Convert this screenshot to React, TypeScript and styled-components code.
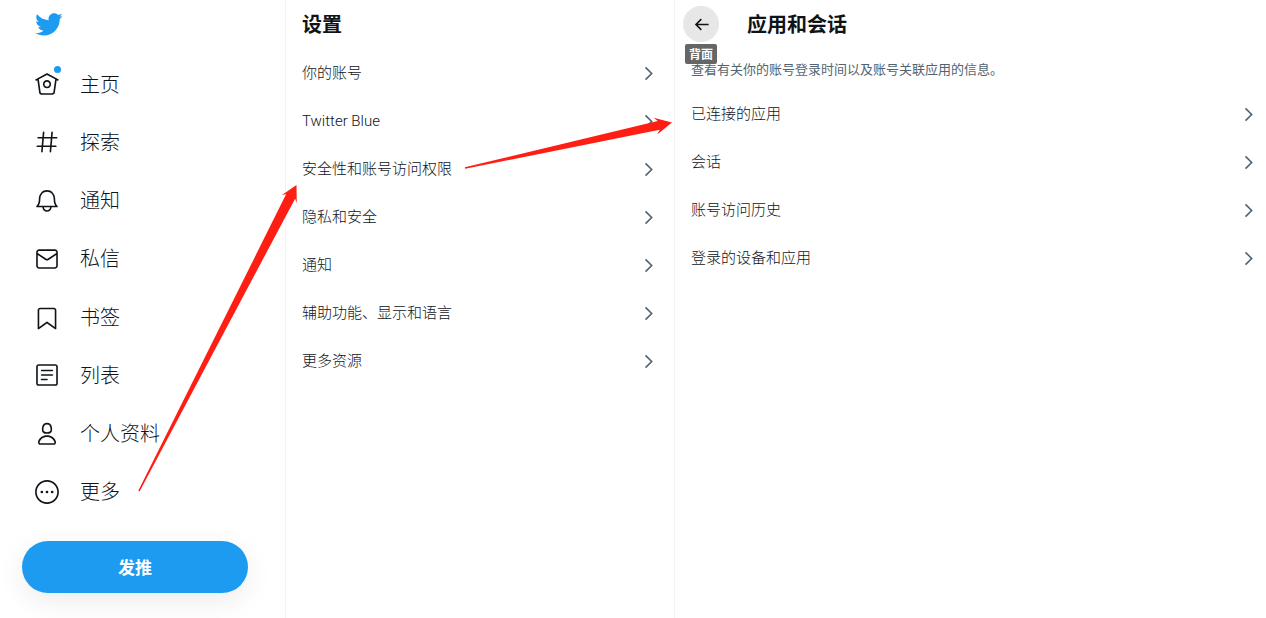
import styled, { createGlobalStyle } from 'styled-components';

const GlobalStyle = createGlobalStyle`
  html, body {
    margin: 0;
    height: 100%;
    overflow: hidden;
    background: #ffffff;
  }
`;

const Page = styled.div`
  position: relative;
  display: flex;
  width: 1266px;
  height: 618px;
  overflow: hidden;
  color: #0f1419;
  font-family: Roboto, 'Noto Sans CJK SC', sans-serif;
`;

const Sidebar = styled.aside`
  flex: 0 0 285px;
  display: flex;
  flex-direction: column;
  border-right: 1px solid #eff3f4;
`;

const Logo = styled.div`
  height: 55px;
  padding: 10px 0 0 34px;
  box-sizing: border-box;
  color: #1d9bf0;

  svg {
    display: block;
    width: 29px;
    height: 29px;
    fill: currentColor;
  }
`;

const NavItem = styled.div`
  height: 58.25px;
  display: flex;
  align-items: center;
  padding-left: 34px;
  gap: 20px;
  font-size: 20px;
  font-weight: 300;
`;

const NavLabel = styled.span`
  margin-top: -2px;
`;

const NavIcon = styled.span`
  position: relative;
  width: 26px;
  height: 26px;
  flex: none;

  svg {
    display: block;
    width: 26px;
    height: 26px;
    fill: #0f1419;
  }
`;

const Dot = styled.i`
  position: absolute;
  top: -5px;
  right: -1px;
  width: 7px;
  height: 7px;
  border-radius: 50%;
  background: #1d9bf0;
`;

const TweetButton = styled.button`
  margin: 20px 0 0 22px;
  width: 226px;
  height: 52px;
  padding: 0 0 2px;
  border: 0;
  border-radius: 26px;
  background: #1d9bf0;
  color: #ffffff;
  font: 700 17px 'Noto Sans CJK SC', sans-serif;
  box-shadow: 0 8px 28px rgba(0, 0, 0, 0.08);
`;

const Column = styled.section<{ $width?: number }>`
  flex: ${(p) => (p.$width ? `0 0 ${p.$width}px` : '1')};
  min-width: 0;
  display: flex;
  flex-direction: column;
  ${(p) => p.$width && 'border-right: 1px solid #eff3f4;'}
`;

const Header = styled.header<{ $inset: number }>`
  position: relative;
  height: 49px;
  flex: none;
  display: flex;
  align-items: center;
  padding-left: ${(p) => p.$inset}px;
`;

const Title = styled.h2`
  margin: -2px 0 0;
  font: 700 20px 'Noto Sans CJK SC', sans-serif;
`;

const BackButton = styled.button`
  width: 36px;
  height: 36px;
  margin: -1px 28px 0 0;
  padding: 0;
  border: 0;
  border-radius: 50%;
  background: #e7e7e7;
  display: flex;
  align-items: center;
  justify-content: center;

  svg {
    width: 19px;
    height: 19px;
    fill: #0f1419;
  }
`;

const Tooltip = styled.span`
  position: absolute;
  left: 10px;
  top: 44px;
  z-index: 1;
  width: 32px;
  height: 20px;
  border-radius: 2px;
  background: #666666;
  color: #ffffff;
  font: 700 12px/20px 'Noto Sans CJK SC', sans-serif;
  text-align: center;
`;

const Description = styled.p`
  height: 41px;
  margin: 0;
  padding: 12px 16px 0;
  box-sizing: border-box;
  color: #536471;
  font-size: 13px;
  line-height: 18px;
`;

const Row = styled.div<{ $inset: number; $right: number }>`
  height: 48px;
  flex: none;
  display: flex;
  align-items: center;
  justify-content: space-between;
  padding: 0 ${(p) => p.$right}px 0 ${(p) => p.$inset}px;
  font-size: 15px;
  font-weight: 300;

  svg {
    width: 19px;
    height: 19px;
    fill: #536471;
  }
`;

const RowLabel = styled.span`
  line-height: 22px;
`;

const ArrowLayer = styled.svg`
  position: absolute;
  inset: 0;
  width: 1266px;
  height: 618px;
  pointer-events: none;
`;

const glyphs: Record<string, string> = {
  home: 'M22.46 7.57L12.357 2.115c-.223-.12-.49-.12-.713 0L1.543 7.57c-.364.197-.5.652-.303 1.017.135.25.394.393.66.393.12 0 .243-.03.356-.09l.815-.44L4.7 19.963c.214 1.215 1.308 2.062 2.658 2.062h9.282c1.352 0 2.445-.848 2.663-2.087l1.626-11.49.818.442c.364.193.82.06 1.017-.304.196-.363.06-.818-.304-1.016zm-4.638 12.133c-.107.606-.703.822-1.18.822H7.36c-.48 0-1.075-.216-1.178-.798L4.48 7.69 12 3.628l7.522 4.06-1.7 12.015z M8.22 12.184c0 2.084 1.695 3.78 3.78 3.78s3.78-1.696 3.78-3.78-1.695-3.78-3.78-3.78-3.78 1.696-3.78 3.78zm6.06 0c0 1.258-1.022 2.28-2.28 2.28s-2.28-1.022-2.28-2.28 1.022-2.28 2.28-2.28 2.28 1.022 2.28 2.28z',
  explore: 'M21 7.337h-3.93l.372-4.272c.036-.412-.27-.775-.682-.812-.417-.03-.776.27-.812.683l-.383 4.4h-6.32l.37-4.27c.037-.413-.27-.776-.68-.813-.42-.03-.777.27-.813.683l-.384 4.4H3.782c-.414 0-.75.337-.75.75s.336.75.75.75H7.61l-.55 6.327H3c-.414 0-.75.336-.75.75s.336.75.75.75h3.93l-.372 4.272c-.036.412.27.775.682.812l.066.003c.385 0 .712-.295.746-.686l.383-4.4h6.32l-.37 4.27c-.036.413.27.776.682.813l.066.003c.385 0 .712-.295.746-.686l.382-4.4h3.957c.413 0 .75-.337.75-.75s-.337-.75-.75-.75H16.39l.55-6.327H21c.414 0 .75-.336.75-.75s-.336-.75-.75-.75zm-6.115 7.826h-6.32l.55-6.326h6.32l-.55 6.326z',
  bell: 'M21.697 16.468c-.02-.016-2.14-1.64-2.103-6.03.02-2.532-.812-4.782-2.347-6.335C15.872 2.71 14.01 1.94 12.005 1.93h-.013c-2.004.01-3.866.78-5.242 2.174-1.534 1.553-2.368 3.802-2.346 6.334.037 4.33-2.02 5.967-2.102 6.03-.26.193-.366.53-.265.838.102.308.39.515.712.515h4.92c.102 2.31 1.997 4.16 4.33 4.16s4.226-1.85 4.327-4.16h4.922c.322 0 .61-.206.71-.514.103-.307-.003-.645-.263-.838zM12 20.478c-1.505 0-2.73-1.177-2.828-2.658h5.656c-.1 1.48-1.323 2.66-2.828 2.66zM4.38 16.32c.74-1.132 1.548-3.028 1.524-5.896-.018-2.16.644-3.982 1.913-5.267C8.91 4.05 10.397 3.437 12 3.43c1.603.008 3.087.62 4.18 1.728 1.27 1.285 1.933 3.106 1.915 5.267-.024 2.868.785 4.765 1.525 5.896H4.38z',
  mail: 'M19.25 3.018H4.75C3.233 3.018 2 4.252 2 5.77v12.495c0 1.518 1.233 2.753 2.75 2.753h14.5c1.517 0 2.75-1.235 2.75-2.753V5.77c0-1.518-1.233-2.752-2.75-2.752zm-14.5 1.5h14.5c.69 0 1.25.56 1.25 1.25v.714l-8.05 5.367c-.273.18-.626.182-.9-.002L3.5 6.482v-.714c0-.69.56-1.25 1.25-1.25zm14.5 14.998H4.75c-.69 0-1.25-.56-1.25-1.25V8.24l7.24 4.83c.383.256.822.384 1.26.384.44 0 .877-.128 1.26-.383l7.24-4.83v10.022c0 .69-.56 1.25-1.25 1.25z',
  bookmark: 'M19.9 23.5c-.157 0-.312-.05-.442-.144L12 17.928l-7.458 5.43c-.228.164-.53.19-.782.06-.25-.127-.41-.385-.41-.667V5.6c0-1.24 1.01-2.25 2.25-2.25h12.798c1.24 0 2.25 1.01 2.25 2.25v17.15c0 .282-.158.54-.41.668-.106.055-.223.082-.34.082zM12 16.25c.155 0 .31.048.44.144l6.71 4.883V5.6c0-.412-.337-.75-.75-.75H5.6c-.413 0-.75.338-.75.75v15.677l6.71-4.883c.13-.096.285-.144.44-.144z',
  list: 'M19.75 22H4.25C3.01 22 2 20.99 2 19.75V4.25C2 3.01 3.01 2 4.25 2h15.5C20.99 2 22 3.01 22 4.25v15.5c0 1.24-1.01 2.25-2.25 2.25zM4.25 3.5c-.414 0-.75.337-.75.75v15.5c0 .413.336.75.75.75h15.5c.414 0 .75-.337.75-.75V4.25c0-.413-.336-.75-.75-.75H4.25z M17 8.64H7c-.414 0-.75-.337-.75-.75s.336-.75.75-.75h10c.414 0 .75.335.75.75s-.336.75-.75.75zm0 4.11H7c-.414 0-.75-.336-.75-.75s.336-.75.75-.75h10c.414 0 .75.336.75.75s-.336.75-.75.75zm-5 4.11H7c-.414 0-.75-.335-.75-.75s.336-.75.75-.75h5c.414 0 .75.337.75.75s-.336.75-.75.75z',
  profile: 'M12 11.816c1.355 0 2.872-.15 3.84-1.256.814-.93 1.078-2.368.806-4.392-.38-2.825-2.117-4.512-4.646-4.512S7.734 3.343 7.354 6.17c-.272 2.022-.008 3.46.806 4.39.968 1.107 2.485 1.256 3.84 1.256zM8.84 6.368c.162-1.2.787-3.212 3.16-3.212s2.998 2.013 3.16 3.212c.207 1.55.057 2.627-.45 3.205-.455.52-1.266.743-2.71.743s-2.255-.223-2.71-.743c-.507-.578-.657-1.656-.45-3.205zm11.44 12.868c-.877-3.526-4.282-5.99-8.28-5.99s-7.403 2.464-8.28 5.99c-.172.692-.028 1.4.395 1.94.408.52 1.04.82 1.733.82h12.304c.693 0 1.325-.3 1.733-.82.424-.54.567-1.247.394-1.94zm-1.576 1.016c-.126.16-.316.246-.552.246H5.848c-.235 0-.426-.085-.552-.246-.137-.174-.18-.412-.12-.654.71-2.855 3.517-4.85 6.824-4.85s6.114 1.994 6.824 4.85c.06.242.017.48-.12.654z',
  more: 'M12 1C5.93 1 1 5.93 1 12s4.93 11 11 11 11-4.93 11-11S18.07 1 12 1zm0 20.5c-5.25 0-9.5-4.25-9.5-9.5S6.75 2.5 12 2.5s9.5 4.25 9.5 9.5-4.25 9.5-9.5 9.5z M7.25 10.75a1.25 1.25 0 1 0 0 2.5 1.25 1.25 0 0 0 0-2.5zM12 10.75a1.25 1.25 0 1 0 0 2.5 1.25 1.25 0 0 0 0-2.5zM16.75 10.75a1.25 1.25 0 1 0 0 2.5 1.25 1.25 0 0 0 0-2.5z',
};

const birdPath =
  'M23.643 4.937c-.835.37-1.732.62-2.675.733.962-.576 1.7-1.49 2.048-2.578-.9.534-1.897.922-2.958 1.13-.85-.904-2.06-1.47-3.4-1.47-2.572 0-4.658 2.086-4.658 4.66 0 .364.042.718.12 1.06-3.873-.195-7.304-2.05-9.602-4.868-.4.69-.63 1.49-.63 2.342 0 1.616.823 3.043 2.072 3.878-.764-.025-1.482-.234-2.11-.583v.06c0 2.257 1.605 4.14 3.737 4.568-.392.106-.803.162-1.227.162-.3 0-.593-.028-.877-.082.593 1.85 2.313 3.198 4.352 3.234-1.595 1.25-3.604 1.995-5.786 1.995-.376 0-.747-.022-1.112-.065 2.062 1.323 4.51 2.093 7.14 2.093 8.57 0 13.255-7.098 13.255-13.254 0-.2-.005-.402-.014-.602.91-.658 1.7-1.477 2.323-2.41z';
const chevronPath = 'M14.586 12L7.543 4.96l1.414-1.42L17.414 12l-8.457 8.46-1.414-1.42L14.586 12z';
const backPath = 'M7.414 13l5.043 5.04-1.414 1.42L3.586 12l7.457-7.46 1.414 1.42L7.414 11H21v2H7.414z';

const navItems = [
  { icon: 'home', label: '主页', dot: true },
  { icon: 'explore', label: '探索' },
  { icon: 'bell', label: '通知' },
  { icon: 'mail', label: '私信' },
  { icon: 'bookmark', label: '书签' },
  { icon: 'list', label: '列表' },
  { icon: 'profile', label: '个人资料' },
  { icon: 'more', label: '更多' },
];

const settings = ['你的账号', 'Twitter Blue', '安全性和账号访问权限', '隐私和安全', '通知', '辅助功能、显示和语言', '更多资源'];
const sessions = ['已连接的应用', '会话', '账号访问历史', '登录的设备和应用'];

// tapered annotation arrow, thin at the tail and wide at the neck
const arrowPoints = (x1: number, y1: number, x2: number, y2: number, neck: number, wing: number, head: number) => {
  const len = Math.hypot(x2 - x1, y2 - y1);
  const dx = (x2 - x1) / len;
  const dy = (y2 - y1) / len;
  const nx = -dy;
  const ny = dx;
  const tail = 0.8;
  const at = (back: number, side: number) => `${x2 - dx * back + nx * side},${y2 - dy * back + ny * side}`;
  const neckBack = head * 0.8;
  return [
    `${x1 + nx * tail},${y1 + ny * tail}`,
    at(neckBack, neck),
    at(head, wing),
    `${x2},${y2}`,
    at(head, -wing),
    at(neckBack, -neck),
    `${x1 - nx * tail},${y1 - ny * tail}`,
  ].join(' ');
};

const Chevron = () => (
  <svg viewBox="0 0 24 24">
    <path d={chevronPath} />
  </svg>
);

export default function App() {
  return (
    <Page>
      <GlobalStyle />
      <Sidebar>
        <Logo>
          <svg viewBox="0 0 24 24">
            <path d={birdPath} />
          </svg>
        </Logo>
        {navItems.map((item) => (
          <NavItem key={item.icon}>
            <NavIcon>
              <svg viewBox="0 0 24 24">
                <path d={glyphs[item.icon]} />
              </svg>
              {item.dot && <Dot />}
            </NavIcon>
            <NavLabel>{item.label}</NavLabel>
          </NavItem>
        ))}
        <TweetButton>发推</TweetButton>
      </Sidebar>

      <Column $width={388}>
        <Header $inset={16}>
          <Title>设置</Title>
        </Header>
        {settings.map((label) => (
          <Row key={label} $inset={16} $right={16}>
            <RowLabel>{label}</RowLabel>
            <Chevron />
          </Row>
        ))}
      </Column>

      <Column>
        <Header $inset={8}>
          <BackButton>
            <svg viewBox="0 0 24 24">
              <path d={backPath} />
            </svg>
          </BackButton>
          <Title>应用和会话</Title>
          <Tooltip>背面</Tooltip>
        </Header>
        <Description>查看有关你的账号登录时间以及账号关联应用的信息。</Description>
        {sessions.map((label) => (
          <Row key={label} $inset={16} $right={8}>
            <RowLabel>{label}</RowLabel>
            <Chevron />
          </Row>
        ))}
      </Column>

      <ArrowLayer viewBox="0 0 1266 618">
        <polygon points={arrowPoints(139, 491, 296.5, 185, 5, 8.5, 16)} fill="#fe1e14" />
        <polygon points={arrowPoints(465, 168, 672, 122.5, 4.5, 8.5, 17)} fill="#fe1e14" />
      </ArrowLayer>
    </Page>
  );
}
